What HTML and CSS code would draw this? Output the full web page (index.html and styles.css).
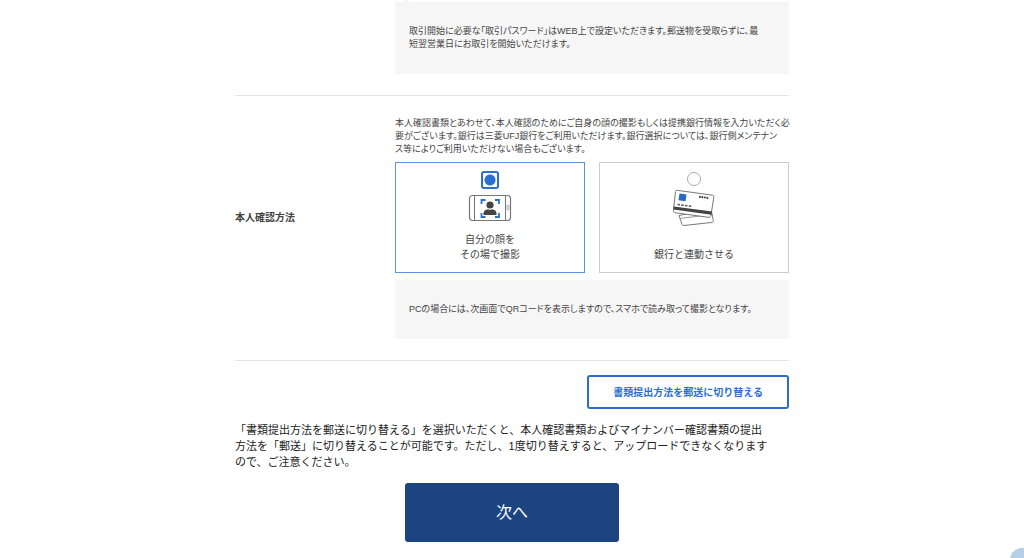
FILE: index.html
```html
<!DOCTYPE html>
<html lang="ja">
<head>
    <meta charset="UTF-8">
    <meta name="viewport" content="width=device-width, initial-scale=1.0">
    <title>本人確認方法</title>
    <link rel="stylesheet" href="styles.css">
</head>
<body>
    <form class="container">
        <div class="row row-first">
            <div class="row-body">
                <p class="note">取引開始に必要な「取引パスワード」はWEB上で設定いただきます。郵送物を受取らずに、最<br>短翌営業日にお取引を開始いただけます。</p>
            </div>
        </div>

        <div class="row" role="radiogroup" aria-labelledby="method-title">
            <h2 class="row-title" id="method-title">本人確認方法</h2>
            <div class="row-body">
                <p class="lead">本人確認書類とあわせて、本人確認のためにご自身の顔の撮影もしくは提携銀行情報を入力いただく必<br>要がございます。銀行は三菱UFJ銀行をご利用いただけます。銀行選択については、銀行側メンテナン<br>ス等によりご利用いただけない場合もございます。</p>
                <div class="cards">
                    <label class="card">
                        <input type="radio" name="method" value="face" checked>
                        <svg class="icon-phone" width="44" height="28" viewBox="0 0 44 28" aria-hidden="true">
                            <rect x="1.5" y="1.5" width="41" height="25" rx="3" fill="#fff" stroke="#777" stroke-width="1.2"/>
                            <path d="M6.5 1.5v25M37.500 1.500v25" stroke="#777" stroke-width="1"/>
                            <rect x="39" y="11" width="2" height="5" rx="1" fill="none" stroke="#999" stroke-width=".8"/>
                            <path d="M13.500 10V6h4M27 6h4v4M31 19v4h-4M17.500 23h-4v-4" fill="none" stroke="#2a6fd0" stroke-width="1.800"/>
                            <circle cx="22" cy="11" r="3.600" fill="#444"/>
                            <path d="M15.500 21v-1.500c0-2.800 2-3.800 4.500-4.300l2 .7 2-.7c2.500.5 4.500 1.500 4.500 4.300V21z" fill="#444"/>
                        </svg>
                        <span class="card-text">自分の顔を<br>その場で撮影</span>
                    </label>
                    <label class="card">
                        <input type="radio" name="method" value="bank">
                        <svg class="icon-cards" width="44" height="38" viewBox="0 0 44 38" aria-hidden="true">
                            <path d="M7 26.500 39 20l2.300 11.500c.2 1-.3 1.700-1.200 1.900L12 36.500c-1 .1-1.700-.3-2-1.300z" fill="#fff" stroke="#777"/>
                            <path d="M7.500 29.500 40.500 25.500" stroke="#999"/>
                            <path d="M5.200 1.300 40.500 6.200c1 .2 1.500.8 1.400 1.800L38.800 27c-.2 1-.8 1.500-1.800 1.400L2.800 23.700c-1-.2-1.500-.8-1.400-1.800L3.500 2.600c.1-1 .7-1.500 1.700-1.300z" fill="#fff" stroke="#777"/>
                            <path d="M1.800 17.500 40 22.500l-.5 3.200L1.400 20.600z" fill="#444"/>
                            <path d="m7.500 4.500 7 1-1 6.700-7-1z" fill="#2467c8"/>
                            <path d="m27 7.700 9.500 1.300" stroke="#444" stroke-width="2" stroke-dasharray="1.800 .7"/>
                            <path d="m5.500 15.400 14 1.900" stroke="#555" stroke-width="1.500" stroke-dasharray="2.500 1.300"/>
                        </svg>
                        <span class="card-text">銀行と連動させる</span>
                    </label>
                </div>
                <p class="note">PCの場合には、次画面でQRコードを表示しますので、スマホで読み取って撮影となります。</p>
            </div>
        </div>

        <div class="switch">
            <button type="button" class="switch-button">書類提出方法を郵送に切り替える</button>
            <p class="switch-text">「書類提出方法を郵送に切り替える」を選択いただくと、本人確認書類およびマイナンバー確認書類の提出<br>方法を「郵送」に切り替えることが可能です。ただし、1度切り替えすると、アップロードできなくなります<br>ので、ご注意ください。</p>
        </div>

        <button type="submit" class="next-button">次へ</button>
    </form>
    <a class="chat" href="#" aria-label="チャット"></a>
</body>
</html>
```
FILE: styles.css
```css
* { box-sizing: border-box; }
body { margin: 0; background: #fff; color: #444; font-family: "Liberation Sans", "Noto Sans CJK JP", sans-serif; overflow-x: hidden; }
p, h2 { margin: 0; }
button { font-family: inherit; cursor: pointer; }

.container { display: flex; flex-direction: column; max-width: 554px; margin: 0 auto; padding: 2px 0 16px; }

.row { display: flex; align-items: center; padding: 21px 0; border-bottom: 1px solid #e6e6e8; }
.row-first { justify-content: flex-end; padding-top: 0; }
.row-title { flex: 1; padding-bottom: 22px; font-size: 10px; line-height: 15px; }
.row-body { width: 394px; }

.lead, .note { font-size: 9px; line-height: 13px; font-feature-settings: "palt"; white-space: nowrap; }
.note { position: relative; padding: 23px 14px; background: #f6f6f6; }
.note::before { content: ""; position: absolute; left: 8px; top: -3px; border: 4px solid transparent; border-top: 0; border-bottom-color: #f6f6f6; }

.cards { display: flex; gap: 14px; margin: 6px 0 7px; }
.card { display: flex; flex: 1; flex-direction: column; align-items: center; height: 111px; padding: 8px 0 10px; border: 1px solid #ccc; cursor: pointer; }
.card:has(input:checked) { border-color: #5b94de; }
.card-text { margin-top: auto; font-size: 10px; line-height: 15px; text-align: center; }

.card input { appearance: none; width: 14px; height: 14px; margin: 1px; border: 1px solid #aaa; border-radius: 50%; }
.card input:checked { width: 18px; height: 18px; margin: 0; border: 2px solid #2a6fd0; border-radius: 3px; background: radial-gradient(circle, #2a6fd0 5px, #fff 6px); }
.icon-phone { margin-top: 5px; }
.icon-cards { margin-top: 2px; }

.switch { display: flex; flex-direction: column; align-items: flex-end; padding-top: 14px; }
.switch-button { height: 34px; padding: 0 24px 2px; border: 2px solid #2a6fd0; border-radius: 3px; background: #fff; color: #2a6fd0; font-size: 10px; font-weight: bold; }
.switch-text { width: 100%; margin: 13px 0; color: #222; font-size: 11px; line-height: 16px; white-space: nowrap; }

.next-button { align-self: center; width: 214px; height: 59px; padding-bottom: 4px; border: 0; border-radius: 3px; background: #1b4481; color: #fff; font-size: 16px; }

/* chat bubble tucked into the corner of the window */
.chat { position: fixed; right: -10px; bottom: -14px; width: 24px; height: 24px; border-radius: 50%; background: #b5cfe8; }
```
